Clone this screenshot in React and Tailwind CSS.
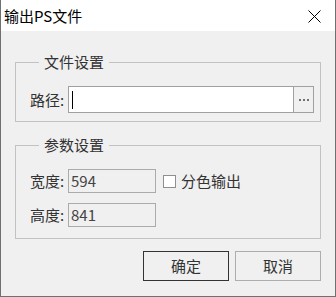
import React from "react";

const font = { fontFamily: '"Noto Sans CJK SC", "Microsoft YaHei", sans-serif' };

export default function App() {
  return (
    <div
      className="w-[336px] h-[297px] flex flex-col border-x border-b border-[#707070] bg-[#f0f0f0] text-[15px] leading-[20px] text-[#333]"
      style={font}
    >
      {/* Title bar */}
      <div className="h-[31px] shrink-0 bg-white flex items-center justify-between pl-[3px] pr-[14px]">
        <span className="text-black text-[15px]">输出PS文件</span>
        <svg width="13" height="13" viewBox="0 0 13 13" className="mt-[1px]">
          <path d="M0.5 0.5 L12.5 12.5 M12.5 0.5 L0.5 12.5" stroke="#000" strokeWidth="1" fill="none" />
        </svg>
      </div>

      {/* Body */}
      <div className="flex-1 flex flex-col px-[14px] pt-[21px]">
        {/* Group 1 */}
        <fieldset className="border border-[#c2c2c2] pb-[8px] pr-[6px] pl-[14px]">
          <legend className="ml-[9px] px-[5px] leading-[20px]">文件设置</legend>
          <div className="mt-[14px] flex items-center h-[27px]">
            <span className="w-[38px] shrink-0">路径:</span>
            <div className="flex-1 h-[27px] flex border border-[#a0a0a0] bg-white">
              <div className="flex-1 flex items-center pl-[3px]">
                <div className="w-[1px] h-[18px] bg-black" />
              </div>
              <div className="w-[20px] border-l border-[#a0a0a0] bg-[#f0f0f0] flex items-center justify-center gap-[2px]">
                <span className="w-[2px] h-[2px] bg-[#707070]" />
                <span className="w-[2px] h-[2px] bg-[#707070]" />
                <span className="w-[2px] h-[2px] bg-[#707070]" />
              </div>
            </div>
          </div>
        </fieldset>

        {/* Group 2 */}
        <fieldset className="mt-[13px] border border-[#c2c2c2] pb-[11px] pl-[14px]">
          <legend className="ml-[9px] px-[5px] leading-[20px]">参数设置</legend>
          <div className="mt-[14px] flex items-center h-[24px]">
            <span className="w-[38px] shrink-0">宽度:</span>
            <div className="w-[88px] h-[24px] border border-[#ababab] flex items-center pl-[2px] text-[#444]">594</div>
            <div className="ml-[7px] w-[13px] h-[13px] border border-[#8f8f8f] bg-white" />
            <span className="ml-[5px]">分色输出</span>
          </div>
          <div className="mt-[10px] flex items-center h-[24px]">
            <span className="w-[38px] shrink-0">高度:</span>
            <div className="w-[88px] h-[24px] border border-[#ababab] flex items-center pl-[2px] text-[#444]">841</div>
          </div>
        </fieldset>

        {/* Buttons */}
        <div className="mt-[12px] flex justify-end gap-[6px]">
          <button className="w-[86px] h-[30px] border border-[#333] bg-[#f0f0f0] text-[#333] flex items-center justify-center">
            确定
          </button>
          <button className="w-[86px] h-[30px] border border-[#adadad] bg-[#f0f0f0] text-[#333] flex items-center justify-center">
            取消
          </button>
        </div>
      </div>
    </div>
  );
}
